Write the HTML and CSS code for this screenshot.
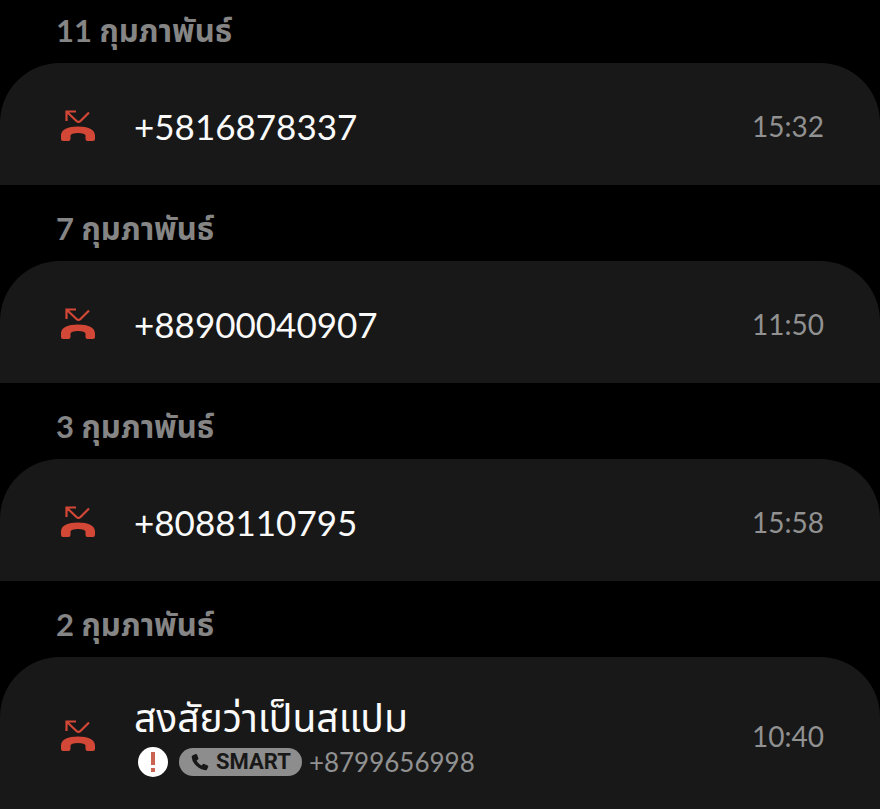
FILE: index.html
```html
<!DOCTYPE html>
<html lang="th">
<head>
    <meta charset="UTF-8">
    <meta name="viewport" content="width=device-width, initial-scale=1.0">
    <title>ประวัติการโทร</title>
    <link rel="stylesheet" href="styles.css">
</head>
<body>
    <!-- Shared icons -->
    <svg class="icon-defs" aria-hidden="true">
        <symbol id="missed-call" viewBox="0 0 36 34">
            <path d="M6.500 12V2.500H16M7 3L16.500 12Q18.500 14 20.500 12L29 3.500" fill="none" stroke="currentColor" stroke-width="2.200"/>
            <path d="M1 30V26.500C1 20.500 8 17.500 18 17.500S35 20.500 35 26.500V30Q35 32 33 32H27.500Q25.500 32 25.500 30V26.500Q25 24 18 24T10.500 26.500V30Q10.500 32 8.500 32H3Q1 32 1 30Z" fill="currentColor"/>
        </symbol>
        <symbol id="handset" viewBox="0 0 18 18">
            <path d="M1.500 2.500L4.500 1Q5.500 .7 6 1.600L7.300 5Q7.600 5.800 7 6.400L5.600 7.600Q7.300 11 10.500 12.400L12 11Q12.600 10.500 13.300 10.900L16.700 12.500Q17.500 13 17.200 13.900L16 16.500Q15.600 17.300 14.500 17.200Q10 17 5.500 13T.7 4Q.6 3 1.500 2.500Z" fill="currentColor"/>
        </symbol>
    </svg>

    <main class="call-log">
        <section class="day">
            <h2 class="date">11 กุมภาพันธ์</h2>
            <div class="call">
                <svg class="missed"><use href="#missed-call"/></svg>
                <div class="caller"><p class="name">+5816878337</p></div>
                <time class="time">15:32</time>
            </div>
        </section>

        <section class="day">
            <h2 class="date">7 กุมภาพันธ์</h2>
            <div class="call">
                <svg class="missed"><use href="#missed-call"/></svg>
                <div class="caller"><p class="name">+88900040907</p></div>
                <time class="time">11:50</time>
            </div>
        </section>

        <section class="day">
            <h2 class="date">3 กุมภาพันธ์</h2>
            <div class="call">
                <svg class="missed"><use href="#missed-call"/></svg>
                <div class="caller"><p class="name">+8088110795</p></div>
                <time class="time">15:58</time>
            </div>
        </section>

        <section class="day">
            <h2 class="date">2 กุมภาพันธ์</h2>
            <div class="call spam">
                <svg class="missed"><use href="#missed-call"/></svg>
                <div class="caller">
                    <p class="name label">สงสัยว่าเป็นสแปม</p>
                    <div class="details">
                        <svg class="warning" viewBox="0 0 30 30">
                            <circle cx="15" cy="15" r="15" fill="#fff"/>
                            <path d="M13 5H17V18H13ZM13 21H17V25H13Z" fill="#c96452"/>
                        </svg>
                        <span class="badge">
                            <svg class="handset"><use href="#handset"/></svg>
                            SMART
                        </span>
                        <span class="number">+8799656998</span>
                    </div>
                </div>
                <time class="time">10:40</time>
            </div>
        </section>
    </main>
</body>
</html>
```
FILE: styles.css
```css
body {
    margin: 0;
    background-color: #000;
    color: #fafafa;
    font-family: Lato, 'Noto Sans Thai', 'Noto Sans', sans-serif;
}
h2, p {
    margin: 0;
}
.icon-defs {
    position: absolute;
    width: 0;
    height: 0;
}
.date {
    padding: 28px 56px 18px;
    color: #858585;
    font-size: 31px;
    font-weight: bold;
    line-height: 30px;
}
.day:first-child .date {
    padding-top: 15px;
}
.call {
    display: flex;
    align-items: center;
    box-sizing: border-box;
    min-height: 122px;
    padding: 4px 56px 0 60px;
    background-color: #181818;
    border-radius: 60px 60px 0 0;
}
.spam {
    min-height: 152px;
    padding-top: 6px;
}
.missed {
    width: 36px;
    height: 34px;
    margin-right: 38px;
    color: #d34737;
}
.caller {
    flex: 1;
}
.name {
    font-size: 35px;
    line-height: 44px;
    white-space: nowrap;
}
.label {
    font-size: 39px;
}
.details {
    display: flex;
    align-items: center;
    margin-top: 7px;
    padding-left: 4px;
}
.warning {
    width: 30px;
    height: 30px;
    margin-right: 11px;
}
.badge {
    display: flex;
    align-items: center;
    gap: 7px;
    height: 28px;
    padding: 0 11px 0 12px;
    border-radius: 14px;
    background-color: #8d8d8d;
    color: #181818;
    font-family: Roboto, sans-serif;
    font-size: 22px;
    font-weight: bold;
}
.handset {
    width: 18px;
    height: 18px;
}
.number {
    margin-left: 7px;
    color: #919191;
    font-size: 26px;
    line-height: 32px;
}
.time {
    color: #919191;
    font-size: 28px;
    line-height: 32px;
}
```
